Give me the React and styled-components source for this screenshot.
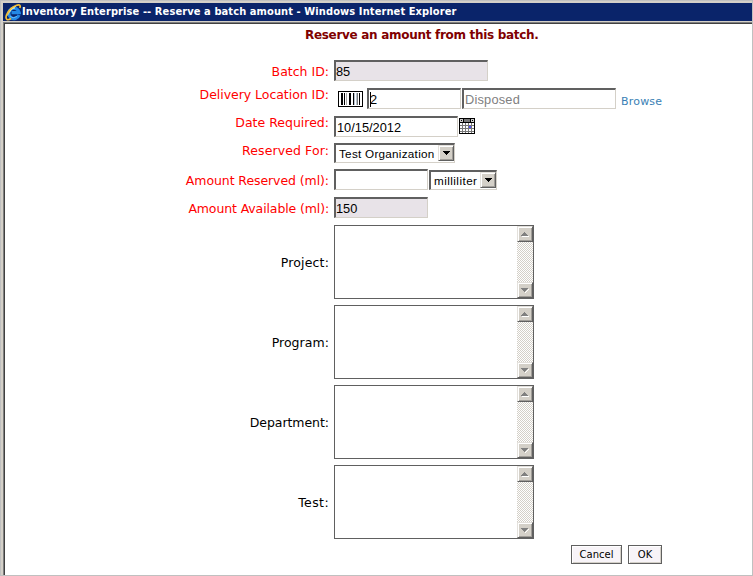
import React from "react";
import styled, { createGlobalStyle } from "styled-components";

const Global = createGlobalStyle`
  * { box-sizing: border-box; }
  body { margin: 0; background: #fff; overflow: hidden; }
`;

const Frame = styled.div`
  width: 753px;
  height: 576px;
  display: flex;
  flex-direction: column;
  background: #d4d0c8;
  border: 1px solid #c0c0c0;
  padding: 2px 0 0 2px;
  font-family: "DejaVu Sans", sans-serif;
`;

const TitleBar = styled.header`
  height: 18px;
  flex: none;
  display: flex;
  align-items: center;
  gap: 1px;
  padding-left: 2px;
  background: #0a246a;
  color: #fff;
  svg { flex: none; }
`;

const Title = styled.span`
  font: bold 11px/18px "DejaVu Sans Condensed", "DejaVu Sans", sans-serif;
  letter-spacing: 0.1px;
  white-space: pre;
  margin-left: -1px;
`;

const Page = styled.main`
  flex: 1;
  margin-top: 1px;
  border: solid #808080;
  border-width: 1px 0 0 1px;
  box-shadow: inset 1px 1px #404040;
  background: #fff;
  display: flex;
  flex-direction: column;
  padding: 1px 0 0 1px;
`;

const Heading = styled.h1`
  margin: 1px 0 0 300px;
  height: 20px;
  font: bold 12px/20px "DejaVu Sans", sans-serif;
  letter-spacing: -0.3px;
  color: #800000;
  white-space: pre;
`;

const Row = styled.div`
  display: flex;
  align-items: flex-start;
  height: ${(p) => p.$h}px;
  margin-top: ${(p) => p.$before}px;
`;

const Label = styled.label`
  width: 324px;
  flex: none;
  margin: ${(p) => p.$top}px 5px 0 0;
  font-size: 12.5px;
  line-height: 20px;
  letter-spacing: ${(p) => p.$track || 0}px;
  text-align: right;
  white-space: pre;
  color: ${(p) => (p.$required ? "#ff0000" : "#000")};
`;

const Field = styled.div`
  width: ${(p) => p.$w}px;
  height: 21px;
  margin: ${(p) => p.$top || 0}px ${(p) => p.$after || 0}px 0 0;
  flex: none;
  display: flex;
  align-items: center;
  padding: 2px 0 0 ${(p) => (p.$locked ? 0 : 1)}px;
  border: solid;
  border-width: 2px 1px 1px 2px;
  border-color: #606060 #d4d0c8 #d4d0c8 #606060;
  background: ${(p) => (p.$locked ? "#e8e3e8" : "#fff")};
  color: ${(p) => (p.$muted ? "#808080" : "#000")};
  font: 12.8px/16px "Liberation Sans", Arial, sans-serif;
  letter-spacing: ${(p) => p.$track || 0}px;
  white-space: pre;
`;

const Caret = styled.span`
  width: 1px;
  height: 15px;
  margin: -2px -1px 0 0;
  background: #000;
`;

const Select = styled(Field)`
  height: 20px;
  padding: 0 0 0 3px;
  font-size: 11.7px;
  line-height: 17px;
  align-items: flex-start;
  justify-content: space-between;
`;

const Arrow = styled.span`
  width: 16px;
  height: 16px;
  flex: none;
  display: flex;
  align-items: center;
  justify-content: center;
  background: #d4d0c8;
  border: 1px solid;
  border-color: #e4e1dc #606060 #606060 #e4e1dc;
  box-shadow: inset 1px 1px #fff, inset -1px -1px #a09d98;
`;

const Browse = styled.a`
  margin: 4px 0 0 5px;
  font-size: 11px;
  line-height: 20px;
  letter-spacing: 0.2px;
  color: #3a7fb5;
`;

const IconSlot = styled.span`
  display: flex;
  margin: ${(p) => p.$margin};
`;

const TextBox = styled.div`
  width: 200px;
  height: 74px;
  border: 1px solid #606060;
  display: flex;
  justify-content: flex-end;
`;

const Scrollbar = styled.div`
  width: 16px;
  display: flex;
  flex-direction: column;
  justify-content: space-between;
  background: conic-gradient(#d4d0c8 25%, #fff 0 50%, #d4d0c8 0 75%, #fff 0) 0 0 / 2px 2px;
`;

const Actions = styled.footer`
  display: flex;
  gap: 6px;
  margin: 6px 0 0 566px;
`;

const Button = styled.button`
  width: ${(p) => p.$w}px;
  height: 19px;
  padding: 0;
  border: 1px solid #606060;
  background: #f8f4f8;
  box-shadow: inset 1px 1px #fff, inset -1px -1px #d4d0c8;
  font: 10px/17px "DejaVu Sans", sans-serif;
  color: #000;
`;

const BrowserIcon = () => (
  <svg width="17" height="17" viewBox="0 0 17 17">
    <path d="M14 11A5.2 5.2 0 1 1 14.2 8.6H6.5" fill="none" stroke="#2388e6" strokeWidth="3.2" />
    <path d="M4.5 7.5Q6 3.8 10 4" fill="none" stroke="#8bd8ff" strokeWidth="1.6" />
    <path d="M5 12.5Q8 15 12 12.5" fill="none" stroke="#67bdf8" strokeWidth="1" />
    <path d="M2 15.5C-1 13 4 4.5 10.5 1.8C14 .2 16.2.8 14.8 4M2 15.5Q3.5 16.3 6 14.5" fill="none" stroke="#f2bd35" strokeWidth="1.7" />
    <path d="M2.5 11.5Q5 5 11 2" fill="none" stroke="#ffe995" strokeWidth=".7" />
  </svg>
);

const BarcodeIcon = () => (
  <svg width="25" height="16" shapeRendering="crispEdges">
    <rect x=".5" y=".5" width="24" height="15" fill="#fff" stroke="#000" />
    <path d="M3 2h2v12h-2zM6 2h1v12h-1zM11 2h2v12h-2zM15 2h1v12h-1zM21 2h1v12h-1z" fill="#000" />
    <path d="M8 2h1v12h-1z" fill="#aaa" />
    <path d="M16 2h1v12h-1zM18 2h1v12h-1z" fill="#b8c4d0" />
    <path d="M19 2h1v12h-1z" fill="#777" />
  </svg>
);

const CalendarIcon = () => (
  <svg width="16" height="16" shapeRendering="crispEdges">
    <path d="M0 0h16v16h-16z" />
    <path d="M1 1h3v3h-3zM12 1h3v3h-3z" fill="#ccc" />
    <path d="M5 1h6v3h-6z" fill="#777" />
    <path d="M2 2h1v1h-1zM13 2h1v1h-1z" />
    <path d="M1 5h14v10h-14z" fill="#777" />
    {[5, 8, 11, 14].map((y) =>
      [1, 4, 7, 10, 13].map((x) => (
        <rect key={`${x}-${y}`} x={x} y={y} width="2" height={y === 14 ? 1 : 2} fill="#fff" />
      ))
    )}
    <path d="M10 8h2v2h-2z" fill="#5555ff" />
  </svg>
);

const DropArrow = () => (
  <Arrow>
    <svg width="7" height="4" shapeRendering="crispEdges">
      <path d="M0 0h7v1h-7zM1 1h5v1h-5zM2 2h3v1h-3zM3 3h1v1h-1z" />
    </svg>
  </Arrow>
);

const ScrollArrow = ({ up }) => (
  <Arrow>
    <svg width="8" height="5" shapeRendering="crispEdges">
      {up ? (
        <>
          <path d="M1 4h7v1h-7z" fill="#fff" />
          <path d="M3 0h1v1h-1zM2 1h3v1h-3zM1 2h5v1h-5zM0 3h7v1h-7z" fill="#808080" />
        </>
      ) : (
        <>
          <path d="M7 1h1v1h-1zM6 2h1v1h-1zM5 3h1v1h-1zM4 4h1v1h-1z" fill="#fff" />
          <path d="M0 0h7v1h-7zM1 1h5v1h-5zM2 2h3v1h-3zM3 3h1v1h-1z" fill="#808080" />
        </>
      )}
    </svg>
  </Arrow>
);

const notes = [
  { name: "Project:", track: 0.15 },
  { name: "Program:", track: 0.05 },
  { name: "Department:", track: -0.05 },
  { name: "Test:", track: 0.4 },
];

export default function App() {
  return (
    <>
      <Global />
      <Frame>
        <TitleBar>
          <BrowserIcon />
          <Title>Inventory Enterprise -- Reserve a batch amount - Windows Internet Explorer</Title>
        </TitleBar>
        <Page>
          <Heading>Reserve an amount from this batch.</Heading>
          <Row $before={15} $h={21}>
            <Label $required $top={2}>Batch ID:</Label>
            <Field $w={154} $locked>85</Field>
          </Row>
          <Row $before={7} $h={21}>
            <Label $required $top={-3} $track={-0.04}>Delivery Location ID:</Label>
            <IconSlot $margin="3px 4px 0"><BarcodeIcon /></IconSlot>
            <Field $w={94} $after={1}><Caret />2</Field>
            <Field $w={154} $muted $track={0.2}>Disposed</Field>
            <Browse>Browse</Browse>
          </Row>
          <Row $before={7} $h={21}>
            <Label $required $top={-3}>Date Required:</Label>
            <Field $w={124}>10/15/2012</Field>
            <IconSlot $margin="2px 0 0 1px"><CalendarIcon /></IconSlot>
          </Row>
          <Row $before={6} $h={20}>
            <Label $required $top={-2} $track={0.1}>Reserved For:</Label>
            <Select $w={121} $track={0.27}>Test Organization<DropArrow /></Select>
          </Row>
          <Row $before={6} $h={21}>
            <Label $required $top={2} $track={-0.08}>Amount Reserved (ml):</Label>
            <Field $w={94} $after={1} />
            <Select $w={68} $top={1} $track={0.45}>milliliter<DropArrow /></Select>
          </Row>
          <Row $before={7} $h={21}>
            <Label $required $top={2} $track={-0.12}>Amount Available (ml):</Label>
            <Field $w={94} $locked>150</Field>
          </Row>
          {notes.map(({ name, track }, i) => (
            <Row key={name} $before={i ? 6 : 7} $h={74}>
              <Label $top={28} $track={track}>{name}</Label>
              <TextBox>
                <Scrollbar>
                  <ScrollArrow up />
                  <ScrollArrow />
                </Scrollbar>
              </TextBox>
            </Row>
          ))}
          <Actions>
            <Button $w={51}>Cancel</Button>
            <Button $w={34}>OK</Button>
          </Actions>
        </Page>
      </Frame>
    </>
  );
}
